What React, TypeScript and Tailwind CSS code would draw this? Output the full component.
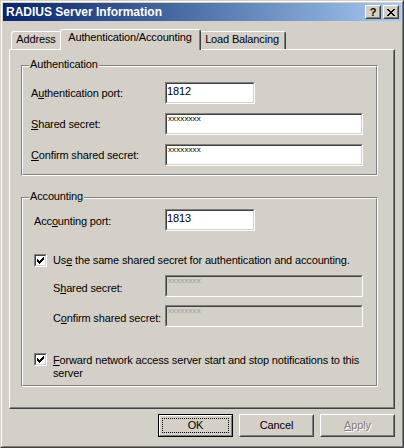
import React from 'react'

const CHECK = ['......X', '.....XX', 'X...XXX', 'XX.XXX.', 'XXXXX..', '.XXX...', '..X....']
const CLOSE = ['XX....XX', '.XX..XX.', '..XXXX..', '...XX...', '..XXXX..', '.XX..XX.', 'XX....XX']

function Pixels({ rows }: { rows: string[] }) {
  const w = rows[0].length
  const h = rows.length
  return (
    <svg width={w} height={h} viewBox={`0 0 ${w} ${h}`} shapeRendering="crispEdges" className="block">
      {rows.flatMap((r, y) =>
        r.split('').map((c, x) => (c === 'X' ? <rect key={`${x}-${y}`} x={x} y={y} width={1} height={1} fill="#000" /> : null))
      )}
    </svg>
  )
}

function Raised({ className, children }: { className: string; children: React.ReactNode }) {
  return (
    <div className={`border border-t-white border-l-white border-r-[#404040] border-b-[#404040] bg-[#d4d0c8] ${className}`}>
      <div className="h-full border border-t-[#d4d0c8] border-l-[#d4d0c8] border-r-[#808080] border-b-[#808080] flex items-center justify-center">
        {children}
      </div>
    </div>
  )
}

function Edit({ width, value, mask, disabled }: { width: string; value?: string; mask?: boolean; disabled?: boolean }) {
  return (
    <div className={`${width} h-[22px] shrink-0 border border-t-[#808080] border-l-[#808080] border-r-white border-b-white`}>
      <div
        className={`h-full border border-t-[#404040] border-l-[#404040] border-r-[#d4d0c8] border-b-[#d4d0c8] ${
          disabled ? 'bg-[#d4d0c8]' : 'bg-white'
        }`}
      >
        {mask ? (
          <div className={`pl-px text-[8px] leading-[8px] tracking-[0.1px] ${disabled ? 'text-[#9c9c9c]' : 'text-black'}`}>xxxxxxxx</div>
        ) : (
          <div className="pt-px">{value}</div>
        )}
      </div>
    </div>
  )
}

function Checkbox() {
  return (
    <div className="w-[13px] h-[13px] shrink-0 border border-t-[#808080] border-l-[#808080] border-r-white border-b-white">
      <div className="h-full border border-t-[#404040] border-l-[#404040] border-r-[#d4d0c8] border-b-[#d4d0c8] bg-white pl-px pt-px">
        <Pixels rows={CHECK} />
      </div>
    </div>
  )
}

// label + edit on one line; labelTop nudges the text down inside the 22px row
function Row({ labelWidth, labelTop, label, children }: { labelWidth: string; labelTop: string; label: React.ReactNode; children: React.ReactNode }) {
  return (
    <div className="flex items-start h-[22px]">
      <span className={`${labelWidth} ${labelTop} shrink-0`}>{label}</span>
      {children}
    </div>
  )
}

function Group({ title, className, children }: { title: string; className: string; children: React.ReactNode }) {
  return (
    <div className={`relative w-[357px] border border-t-[#808080] border-l-[#808080] border-r-white border-b-white ${className}`}>
      <div className="h-full border border-t-white border-l-white border-r-[#808080] border-b-[#808080]">{children}</div>
      <span className="absolute left-[7px] top-[-8px] px-px bg-[#d4d0c8]">{title}</span>
    </div>
  )
}

function Tab({ label, width, selected }: { label: string; width: string; selected?: boolean }) {
  return (
    <div
      className={`${width} ${
        selected ? 'h-[21px] -mb-px -mx-[2px] relative z-10' : 'h-[18px]'
      } bg-[#d4d0c8] border-l border-t border-r border-l-white border-t-white border-r-[#404040] rounded-t-[3px]`}
    >
      <div className="h-full border-r border-r-[#808080] flex justify-center pt-px">{label}</div>
    </div>
  )
}

export default function App() {
  return (
    <div className="w-[404px] h-[448px] bg-[#d4d0c8] border border-t-[#d4d0c8] border-l-[#d4d0c8] border-r-[#404040] border-b-[#404040] font-['Liberation_Sans',Arial,sans-serif] text-[11px] leading-[13px] tracking-[-0.15px] text-black">
      <div className="h-full border border-t-white border-l-white border-r-[#808080] border-b-[#808080] p-px flex flex-col">
        {/* title bar */}
        <div className="h-[18px] shrink-0 flex items-center bg-linear-to-r from-[#0a246a] to-[#a6caf0] pl-[3px] pr-[2px]">
          <span className="flex-1 text-white font-bold text-[12px] tracking-normal">RADIUS Server Information</span>
          <Raised className="w-[16px] h-[14px]">
            <span className="font-bold text-[11px] leading-none tracking-normal">?</span>
          </Raised>
          <Raised className="w-[16px] h-[14px] ml-[2px]">
            <Pixels rows={CLOSE} />
          </Raised>
        </div>

        <div className="flex-1 px-[6px] pt-[8px] flex flex-col">
          {/* tabs */}
          <div className="flex items-end h-[20px] pl-[2px]">
            <Tab label="Address" width="w-[51px]" />
            <Tab label="Authentication/Accounting" width="w-[141px]" selected />
            <Tab label="Load Balancing" width="w-[87px]" />
          </div>

          {/* tab page */}
          <div className="h-[360px] border border-t-white border-l-white border-r-[#404040] border-b-[#404040]">
            <div className="h-full border-r border-b border-r-[#808080] border-b-[#808080] pl-[11px] pt-[15px] flex flex-col">
              <Group title="Authentication" className="h-[111px]">
                <div className="pt-[15px] pl-[8px] flex flex-col gap-[9px]">
                  <Row labelWidth="w-[134px]" labelTop="mt-[5px]" label={<>A<u>u</u>thentication port:</>}>
                    <Edit width="w-[90px]" value="1812" />
                  </Row>
                  <Row labelWidth="w-[134px]" labelTop="mt-[5px]" label={<><u>S</u>hared secret:</>}>
                    <Edit width="w-[198px]" mask />
                  </Row>
                  <Row labelWidth="w-[134px]" labelTop="mt-[5px]" label={<><u>C</u>onfirm shared secret:</>}>
                    <Edit width="w-[198px]" mask />
                  </Row>
                </div>
              </Group>

              <Group title="Accounting" className="h-[190px] mt-[21px]">
                <div className="pt-[10px] pl-[11px] flex flex-col">
                  <Row labelWidth="w-[131px]" labelTop="mt-[6px]" label={<>Acc<u>o</u>unting port:</>}>
                    <Edit width="w-[90px]" value="1813" />
                  </Row>
                  <div className="mt-[23px] flex items-center gap-[6px] h-[13px]">
                    <Checkbox />
                    <span>Us<u>e</u> the same shared secret for authentication and accounting.</span>
                  </div>
                  <div className="mt-[8px] ml-[19px]">
                    <Row labelWidth="w-[112px]" labelTop="mt-[7px]" label={<>S<u>h</u>ared secret:</>}>
                      <Edit width="w-[198px]" mask disabled />
                    </Row>
                  </div>
                  <div className="mt-[8px] ml-[19px]">
                    <Row labelWidth="w-[112px]" labelTop="mt-[7px]" label={<>C<u>o</u>nfirm shared secret:</>}>
                      <Edit width="w-[198px]" mask disabled />
                    </Row>
                  </div>
                  <div className="mt-[26px] flex items-start gap-[6px]">
                    <Checkbox />
                    <span className="mt-[1px]">
                      <u>F</u>orward network access server start and stop notifications to this
                      <br />
                      server
                    </span>
                  </div>
                </div>
              </Group>
            </div>
          </div>

          {/* buttons */}
          <div className="mt-[5px] flex justify-end gap-[6px]">
            <div className="relative w-[75px] h-[23px] border border-black">
              <div className="h-full border border-t-white border-l-white border-r-[#808080] border-b-[#808080] flex items-center justify-center">
                OK
              </div>
              <div className="absolute inset-[3px] border border-dotted border-black" />
            </div>
            <Raised className="w-[75px] h-[23px]">Cancel</Raised>
            <Raised className="w-[75px] h-[23px]">
              <span className="text-[#808080] [text-shadow:1px_1px_0_#fff]">
                <u>A</u>pply
              </span>
            </Raised>
          </div>
        </div>
      </div>
    </div>
  )
}
